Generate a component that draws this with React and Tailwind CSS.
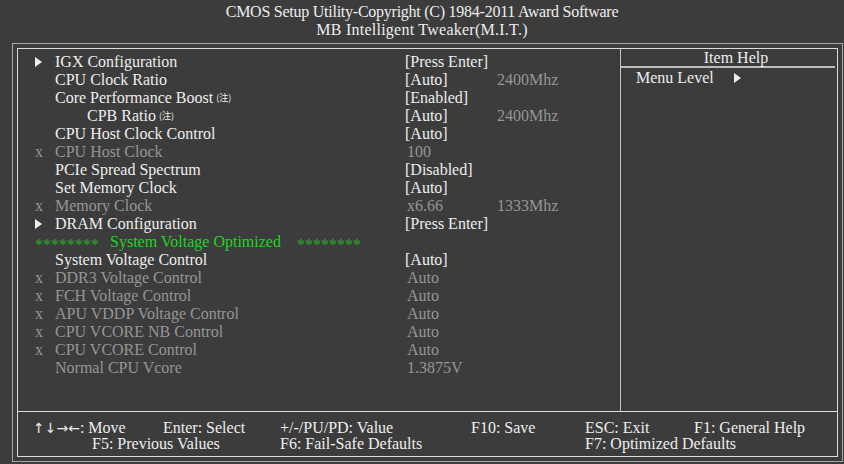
import React from "react";

const rows = [
  { mark: "arrow", label: "IGX Configuration", value: "[Press Enter]" },
  { label: "CPU Clock Ratio", value: "[Auto]", extra: "2400Mhz" },
  { label: "Core Performance Boost", note: true, value: "[Enabled]" },
  { label: "CPB Ratio", note: true, indent: true, value: "[Auto]", extra: "2400Mhz" },
  { label: "CPU Host Clock Control", value: "[Auto]" },
  { mark: "x", dim: true, label: "CPU Host Clock", value: "100" },
  { label: "PCIe Spread Spectrum", value: "[Disabled]" },
  { label: "Set Memory Clock", value: "[Auto]" },
  { mark: "x", dim: true, label: "Memory Clock", value: "x6.66", extra: "1333Mhz" },
  { mark: "arrow", label: "DRAM Configuration", value: "[Press Enter]" },
  { green: true },
  { label: "System Voltage Control", value: "[Auto]" },
  { mark: "x", dim: true, label: "DDR3 Voltage Control", value: "Auto" },
  { mark: "x", dim: true, label: "FCH Voltage Control", value: "Auto" },
  { mark: "x", dim: true, label: "APU VDDP Voltage Control", value: "Auto" },
  { mark: "x", dim: true, label: "CPU VCORE NB Control", value: "Auto" },
  { mark: "x", dim: true, label: "CPU VCORE Control", value: "Auto" },
  { dim: true, label: "Normal CPU Vcore", value: "1.3875V" },
];

function Arrow() {
  return (
    <svg width="7" height="10" viewBox="0 0 7 10" className="inline-block">
      <polygon points="0,0 7,5 0,10" fill="#eeeeee" />
    </svg>
  );
}

function Note() {
  return (
    <sup
      className="text-[9px] ml-[3px] relative top-[-2px]"
      style={{ fontFamily: '"Noto Sans CJK SC", "Liberation Serif", serif' }}
    >
      (注)
    </sup>
  );
}

function Row({ row }) {
  if (row.green) {
    return (
      <div className="flex h-[18px] items-center pl-[17px]">
        <span className="w-[75px] text-[#2aa82a] relative top-[3px]">********</span>
        <span className="w-[187px] text-[#1fd61f]">System Voltage Optimized</span>
        <span className="text-[#2aa82a] relative top-[3px]">********</span>
      </div>
    );
  }
  const color = row.dim ? "text-[#969696]" : "text-[#eeeeee]";
  return (
    <div className={`flex h-[18px] items-center pl-[17px] ${color}`}>
      <span className="w-[20px] flex items-center">
        {row.mark === "arrow" && <Arrow />}
        {row.mark === "x" && <span className="text-[#969696]">x</span>}
      </span>
      <span className={`w-[350px] whitespace-nowrap ${row.indent ? "pl-[32px]" : ""}`}>
        {row.label}
        {row.note && <Note />}
      </span>
      <span className={`w-[92px] whitespace-nowrap ${row.dim ? "pl-[2px]" : ""}`}>{row.value}</span>
      {row.extra && <span className="text-[#969696]">{row.extra}</span>}
    </div>
  );
}

export default function App() {
  return (
    <div
      className="w-[844px] h-[464px] bg-[#3c3c3c] text-[#eeeeee] text-[16px] leading-[18px] overflow-hidden"
      style={{ fontFamily: '"Liberation Serif", "Times New Roman", serif' }}
    >
      <div className="h-[43px] pt-[3px] text-center">
        <div className="tracking-[-0.25px]">CMOS Setup Utility-Copyright (C) 1984-2011 Award Software</div>
        <div className="tracking-[0.25px]">MB Intelligent Tweaker(M.I.T.)</div>
      </div>
      <div className="ml-[12px] w-[831px] h-[419px] border border-[#a8a8a8] p-[4px]">
        <div className="h-full border border-[#dcdcdc] flex flex-col">
          <div className="h-[363px] flex border-b border-[#dcdcdc]">
            <div className="w-[603px] border-r border-[#c4c4c4] pt-[4px]">
              {rows.map((row, i) => (
                <Row key={i} row={row} />
              ))}
            </div>
            <div className="flex-1">
              <div className="h-[19px] mr-[2px] pl-[16px] border-b-2 border-[#bcbcbc] text-center leading-[18px]">
                Item Help
              </div>
              <div className="flex items-center h-[18px] pl-[15px] mt-[1px]">
                <span>Menu Level</span>
                <span className="ml-[20px] flex items-center">
                  <Arrow />
                </span>
              </div>
            </div>
          </div>
          <div className="pt-[8px]">
            <div className="flex h-[16px] items-center pl-[15px] whitespace-nowrap">
              <span className="w-[130px]">
                <span className="text-[14px] leading-none" style={{ fontFamily: '"DejaVu Sans", sans-serif' }}>
                  ↑↓→←
                </span>
                : Move
              </span>
              <span className="w-[117px]">Enter: Select</span>
              <span className="w-[191px]">+/-/PU/PD: Value</span>
              <span className="w-[114px]">F10: Save</span>
              <span className="w-[109px]">ESC: Exit</span>
              <span>F1: General Help</span>
            </div>
            <div className="flex h-[16px] items-center pl-[74px] whitespace-nowrap">
              <span className="w-[188px]">F5: Previous Values</span>
              <span className="w-[305px]">F6: Fail-Safe Defaults</span>
              <span>F7: Optimized Defaults</span>
            </div>
          </div>
        </div>
      </div>
    </div>
  );
}
